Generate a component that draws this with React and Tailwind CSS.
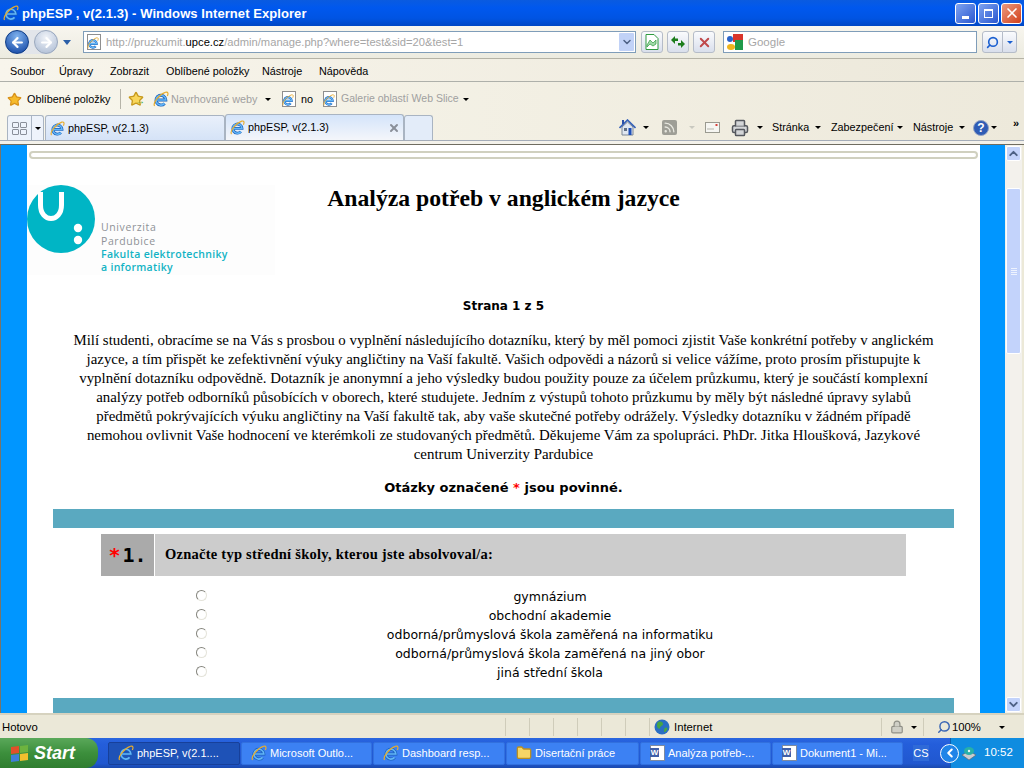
import { ChevronDown, Search, X, Star, Rss, Printer, Folder, Lock, ChevronLeft, ChevronUp, ArrowLeft, ArrowRight } from "lucide-react";

const introLines = [
  "Milí studenti, obracíme se na Vás s prosbou o vyplnění následujícího dotazníku, který by měl pomoci zjistit Vaše konkrétní potřeby v anglickém",
  "jazyce, a tím přispět ke zefektivnění výuky angličtiny na Vaší fakultě. Vašich odpovědi a názorů si velice vážíme, proto prosím přistupujte k",
  "vyplnění dotazníku odpovědně. Dotazník je anonymní a jeho výsledky budou použity pouze za účelem průzkumu, který je součástí komplexní",
  "analýzy potřeb odborníků působících v oborech, které studujete. Jedním z výstupů tohoto průzkumu by měly být následné úpravy sylabů",
  "předmětů pokrývajících výuku angličtiny na Vaší fakultě tak, aby vaše skutečné potřeby odrážely. Výsledky dotazníku v žádném případě",
  "nemohou ovlivnit Vaše hodnocení ve kterémkoli ze studovaných předmětů. Děkujeme Vám za spolupráci. PhDr. Jitka Hloušková, Jazykové",
  "centrum Univerzity Pardubice",
];

const options = [
  "gymnázium",
  "obchodní akademie",
  "odborná/průmyslová škola zaměřená na informatiku",
  "odborná/průmyslová škola zaměřená na jiný obor",
  "jiná střední škola",
];

const menu = [
  ["Soubor", "w-[49px]"],
  ["Úpravy", "w-[51px]"],
  ["Zobrazit", "w-[56px]"],
  ["Oblíbené položky", "w-[96px]"],
  ["Nástroje", "w-[57px]"],
  ["Nápověda", "w-[60px]"],
];

function IeIcon({ size = 16 }) {
  return (
    <svg width={size} height={size} viewBox="0 0 16 16" className="shrink-0">
      <path d="M3.6 9h9.2A4.9 4.9 0 1 0 11.6 12.4" fill="none" stroke="#1a5fb8" strokeWidth="3" />
      <path d="M3.6 9h9.2A4.9 4.9 0 1 0 11.6 12.4" fill="none" stroke="#63b6f7" strokeWidth="1.7" />
      <path d="M1.6 15C-.5 12 6 3.5 12.5 1.2c2.6-.8 3 1.4 1.8 3.8" fill="none" stroke="#e8ac2c" strokeWidth="1.2" />
    </svg>
  );
}

function PageIe() {
  return (
    <div className="relative w-[14px] h-[16px] bg-white border border-[#8f8f8f] shrink-0">
      <div className="absolute -left-[1px] top-[2px]">
        <IeIcon size={12} />
      </div>
    </div>
  );
}

function Caret({ className = "border-t-black" }) {
  return <div className={`w-0 h-0 border-x-[3px] border-x-transparent border-t-[3px] shrink-0 ${className}`} />;
}

function SmallButton({ children, className = "" }) {
  return (
    <div className={`h-[22px] shrink-0 flex items-center justify-center rounded-[3px] border border-[#b5bcc8] bg-[linear-gradient(#fafbfd,#d9dfec)] ${className}`}>
      {children}
    </div>
  );
}

function WinButton({ className, children }) {
  return (
    <div className={`w-[21px] h-[21px] rounded-[3px] border border-white flex items-center justify-center ${className}`}>
      {children}
    </div>
  );
}

function Tab({ active, width, children }) {
  return (
    <div className={`shrink-0 flex items-center gap-[3px] pl-[4px] border border-[#a9b4c2] border-b-0 rounded-t-[3px] ${width} ${active ? "bg-[linear-gradient(#d4e4fa,#f4f6fa)] h-[26px]" : "h-[25px] bg-[linear-gradient(#e9f0fb,#d5e3f7)]"}`}>
      {children}
    </div>
  );
}

function NavCircle({ dim, children }) {
  return (
    <div className={`w-[24px] h-[24px] rounded-full flex items-center justify-center border shrink-0 ${dim ? "bg-[radial-gradient(circle_at_50%_30%,#f0f3f8,#a9b9d2)] border-[#9aa8bd]" : "bg-[radial-gradient(circle_at_50%_25%,#7fb2ee,#0c3f9f)] border-[#0f3d86]"}`}>
      {children}
    </div>
  );
}

function WordIcon() {
  return (
    <div className="relative w-[15px] h-[16px] bg-white border border-[#7d8aa0] shrink-0">
      <div className="absolute -left-[1px] top-[2px] w-[9px] h-[9px] bg-[#3f5fa8] text-white text-[8px] leading-[9px] font-bold text-center">W</div>
    </div>
  );
}

function TaskButton({ active, icon, label, className = "" }) {
  return (
    <div className={`h-[23px] shrink-0 flex items-center gap-[3px] pl-[9px] rounded-[2px] text-white text-[11px] whitespace-nowrap overflow-hidden ${active ? "bg-[#1e52b7] border border-[#17409a]" : "bg-[#3c81f3] border border-[#3270de]"} ${className}`}>
      {icon}
      <span>{label}</span>
    </div>
  );
}

function Radio() {
  return <div className="w-[11px] h-[11px] -mt-[4px] rounded-full border border-t-[#85857d] border-l-[#85857d] border-r-[#e4e3da] border-b-[#e4e3da] bg-white shrink-0" />;
}

function Logo() {
  return (
    <div className="flex h-[90px] w-[248px] bg-[#fdfdfd]">
      <svg width="68" height="68" viewBox="0 0 68 68" className="shrink-0">
        <circle cx="34" cy="34" r="34" fill="#00b5c5" />
        <path d="M13.5 7v13c0 18 21 18 21 0V7" fill="none" stroke="#fff" strokeWidth="5" />
        <circle cx="51" cy="43" r="4.2" fill="#fff" />
        <circle cx="51" cy="55" r="4.2" fill="#fff" />
      </svg>
      <div className="ml-[6px] mt-[35px] font-['Open_Sans',sans-serif] text-[10.5px] leading-[14px] tracking-[0.6px] whitespace-nowrap">
        <div className="text-[#8f9297]">Univerzita</div>
        <div className="text-[#8f9297]">Pardubice</div>
        <div className="text-[#12b3c4] font-semibold leading-[13px] tracking-[0.3px]">Fakulta elektrotechniky</div>
        <div className="text-[#12b3c4] font-semibold leading-[13px] tracking-[0.3px]">a informatiky</div>
      </div>
    </div>
  );
}

export default function App() {
  return (
    <div className="w-[1024px] h-[768px] flex flex-col overflow-hidden font-['Liberation_Sans',sans-serif] text-[10.8px] text-black bg-[#ece9d8]">
      {/* Title bar */}
      <div className="h-[26px] shrink-0 flex items-center pl-[3px] pr-[2px] bg-[linear-gradient(#0a5be0,#0058ee_30%,#0054e3_70%,#0047c4)]">
        <IeIcon size={16} />
        <span className="ml-[3px] mt-[1px] font-bold text-[13px] tracking-[0.07px] text-white whitespace-nowrap">phpESP , v(2.1.3) - Windows Internet Explorer</span>
        <div className="ml-auto flex gap-[2px]">
          <WinButton className="bg-[linear-gradient(135deg,#7ea3f0,#2a57d0)]"><div className="w-[7px] h-[3px] bg-white mt-[9px] -ml-[1px]" /></WinButton>
          <WinButton className="bg-[linear-gradient(135deg,#7ea3f0,#2a57d0)]"><div className="w-[9px] h-[9px] border border-white border-t-2" /></WinButton>
          <WinButton className="bg-[linear-gradient(135deg,#ec9a80,#d2401a)]"><X size={16} strokeWidth={2.5} color="#fff" /></WinButton>
        </div>
      </div>

      {/* Address row */}
      <div className="h-[33px] shrink-0 flex items-center pl-[5px] bg-[linear-gradient(#f8f6ef,#ecebe0)] border-b border-[#b5b3a6]">
        <div className="flex items-center gap-[5px] rounded-full bg-[#e2e5ea]">
          <NavCircle><ArrowLeft size={15} strokeWidth={3.5} color="#fff" /></NavCircle>
          <NavCircle dim><ArrowRight size={15} strokeWidth={3.5} color="#fff" /></NavCircle>
        </div>
        <Caret className="ml-[5px] border-x-[4px] border-t-[5px] border-t-[#2a5fa8]" />
        <div className="ml-[12px] w-[553px] shrink-0 h-[22px] flex items-center pl-[3px] pr-[1px] bg-white border border-[#7f9db9]">
          <PageIe />
          <span className="ml-[5px] mt-[1px] text-[#a6a6a6] text-[11.2px] whitespace-nowrap">http://pruzkumit.<span className="text-black">upce.cz</span>/admin/manage.php?where=test&amp;sid=20&amp;test=1</span>
          <div className="ml-auto w-[15px] h-[18px] flex items-center justify-center bg-[#c1d2f7] rounded-[1px]"><ChevronDown size={12} strokeWidth={3} color="#4d6185" /></div>
        </div>
        <SmallButton className="ml-[5px] w-[22px]">
          <svg width="14" height="16" viewBox="0 0 14 16">
            <path d="M1 .5h8l4 4v11H1z" fill="#fff" stroke="#2e9a3e" />
            <path d="M2 11l3-5 3 3 3-3v4l-3 2-3-2-3 3z" fill="#9fd8a8" stroke="#2e9a3e" strokeWidth=".7" />
          </svg>
        </SmallButton>
        <SmallButton className="ml-[4px] w-[22px]">
          <svg width="16" height="14" viewBox="0 0 16 14">
            <path d="M1 5l4-4v2.5h3V6H5v3zM15 9l-4 4v-2.5H8V8h3V5z" fill="#1c7d1c" />
          </svg>
        </SmallButton>
        <SmallButton className="ml-[4px] w-[22px]"><X size={15} strokeWidth={3} color="#c0494b" /></SmallButton>
        <div className="ml-[8px] w-[254px] shrink-0 h-[22px] flex items-center bg-white border border-[#7f9db9] pl-[2px]">
          <svg width="17" height="16" viewBox="0 0 17 16">
            <rect x="7" y="0" width="10" height="8" fill="#d9352b" />
            <rect x="9" y="6" width="8" height="10" fill="#1f9a4a" />
            <circle cx="4" cy="5" r="3" fill="#2a63c9" />
            <ellipse cx="5" cy="13" rx="4" ry="3" fill="#efb41c" />
          </svg>
          <span className="ml-[5px] mt-[1px] text-[#a6a6a6] text-[11.5px]">Google</span>
        </div>
        <SmallButton className="ml-[5px] w-[21px] rounded-r-none"><Search size={13} strokeWidth={3} color="#1a5fd0" className="-scale-x-100" /></SmallButton>
        <SmallButton className="w-[14px] rounded-l-none border-l-0"><Caret className="border-t-[#1a5fd0]" /></SmallButton>
      </div>

      {/* Menu row */}
      <div className="h-[23px] shrink-0 flex items-center pl-[10px] pt-[2px] bg-[linear-gradient(90deg,#f8f5ec,#ece8da)] border-b border-[#aeb0aa]">
        {menu.map(([label, width]) => (
          <span key={label} className={`${width} whitespace-nowrap`}>{label}</span>
        ))}
      </div>

      {/* Favorites row */}
      <div className="h-[33px] shrink-0 flex items-center pl-[7px] pt-[1px] bg-[linear-gradient(90deg,#f8f6ec,#ede9db)]">
        <Star size={15} fill="#f6bb2b" color="#d8921a" />
        <span className="ml-[5px] w-[93px] shrink-0 whitespace-nowrap">Oblíbené položky</span>
        <div className="w-px h-[20px] bg-[#b6b4a8]" />
        <div className="ml-[7px] relative w-[17px] h-[16px] shrink-0">
          <Star size={16} fill="#f9d65a" color="#c79a1e" />
          <div className="absolute right-0 bottom-[1px] text-[#3aa63a] font-bold text-[10px] leading-none">→</div>
        </div>
        <div className="ml-[8px]"><IeIcon size={16} /></div>
        <span className="ml-[2px] w-[88px] shrink-0 text-[#a0a0a0] whitespace-nowrap">Navrhované weby</span>
        <Caret className="ml-[6px]" />
        <div className="ml-[11px]"><PageIe /></div>
        <span className="ml-[5px] w-[22px] shrink-0">no</span>
        <PageIe />
        <span className="ml-[4px] w-[116px] shrink-0 text-[#a0a0a0] text-[10.5px] whitespace-nowrap">Galerie oblastí Web Slice</span>
        <Caret className="ml-[6px]" />
      </div>

      {/* Tab row */}
      <div className="h-[26px] shrink-0 flex items-end pl-[7px] bg-[linear-gradient(90deg,#f8f6ec,#ede9db)] border-b border-[#a4acb8]">
        <div className="h-[25px] w-[37px] shrink-0 flex border border-[#a9b4c2] border-b-0 rounded-t-[3px] bg-[#eef3fb]">
          <div className="w-[24px] flex items-center justify-center border-r border-[#a9b4c2]">
            <div className="grid grid-cols-2 gap-[1px]">
              <div className="w-[7px] h-[6px] border border-[#8a8f99] rounded-[1px]" />
              <div className="w-[7px] h-[6px] border border-[#8a8f99] rounded-[1px]" />
              <div className="w-[7px] h-[6px] border border-[#8a8f99] rounded-[1px]" />
              <div className="w-[7px] h-[6px] border border-[#8a8f99] rounded-[1px]" />
            </div>
          </div>
          <div className="flex-1 flex items-center justify-center"><Caret /></div>
        </div>
        <Tab width="w-[180px] ml-[1px]">
          <IeIcon size={15} />
          <span className="whitespace-nowrap">phpESP, v(2.1.3)</span>
        </Tab>
        <Tab active width="w-[179px]">
          <IeIcon size={15} />
          <span className="whitespace-nowrap">phpESP, v(2.1.3)</span>
          <X className="ml-[56px]" size={12} strokeWidth={4} color="#8a8f99" />
        </Tab>
        <div className="h-[25px] w-[29px] shrink-0 border border-[#a9b4c2] border-b-0 rounded-t-[3px] bg-[#e3ecf9]" />
        <div className="ml-[186px] h-[25px] flex items-center shrink-0">
          <svg width="17" height="17" viewBox="0 0 17 17" className="shrink-0">
            <path d="M3 8v8h11V8L8.5 3z" fill="#dfe6f0" stroke="#7d8796" />
            <path d="M.5 9l8-8 8 8" fill="none" stroke="#3560b8" strokeWidth="1.6" />
            <rect x="3" y="1" width="2" height="4" fill="#2a4fa8" />
            <rect x="9.5" y="9" width="3" height="7" fill="#1f4fb8" />
            <rect x="5" y="9" width="3" height="3" fill="#5f6f86" />
          </svg>
          <Caret className="ml-[7px]" />
          <Rss className="ml-[13px] shrink-0 bg-[#9e9e96] rounded-[2px] p-[1px]" size={15} strokeWidth={2.5} color="#e8e8e0" />
          <Caret className="ml-[12px] border-t-[#c9c9c0]" />
          <svg width="15" height="11" viewBox="0 0 15 11" className="ml-[10px] shrink-0">
            <rect x=".5" y=".5" width="14" height="10" fill="#f6f6f2" stroke="#9a9a90" />
            <path d="M2 7h7" stroke="#b5b5ac" />
            <rect x="10.5" y="2" width="2" height="2" fill="#d8413a" />
          </svg>
          <Printer className="ml-[11px] shrink-0" size={18} fill="#d4d6d8" color="#55585e" />
          <Caret className="ml-[8px]" />
          <span className="ml-[9px] w-[38px] shrink-0 whitespace-nowrap">Stránka</span>
          <Caret className="ml-[5px]" />
          <span className="ml-[10px] w-[61px] shrink-0 whitespace-nowrap">Zabezpečení</span>
          <Caret className="ml-[5px]" />
          <span className="ml-[10px] w-[41px] shrink-0 whitespace-nowrap">Nástroje</span>
          <Caret className="ml-[5px]" />
          <div className="ml-[8px] w-[16px] h-[16px] shrink-0 rounded-full bg-[#2f5cb5] border border-[#93a3c4] text-white font-bold text-[12px] leading-[14px] text-center">?</div>
          <Caret className="ml-[2px]" />
          <span className="ml-[16px] -mt-[8px] text-[11px] font-bold leading-none">»</span>
        </div>
      </div>

      <div className="h-[4px] shrink-0 bg-[#f3f1ea] border-b border-[#6f6c60]" />

      {/* Page area */}
      <div className="flex h-[568px] shrink-0 overflow-hidden">
        <div className="w-[1px] bg-[#77756a] shrink-0" />
        <div className="w-[26px] bg-[#0096ff] shrink-0" />
        <main className="w-[953px] shrink-0 bg-white overflow-hidden">
          <div className="ml-[2px] mr-[2px] mt-[6px] h-[8px] border-2 border-[#d0d0bf] rounded-[4px]" />

          <div className="grid grid-cols-[250px_1fr_250px] mt-[26px]">
            <Logo />
            <h1 className="font-['Liberation_Serif',serif] font-bold text-[23.7px] leading-[28px] text-center whitespace-nowrap -mt-[1px]">Analýza potřeb v anglickém jazyce</h1>
            <div />
          </div>

          <p className="mt-[22px] font-['DejaVu_Sans',sans-serif] font-bold text-[12px] leading-[18px] text-center">Strana 1 z 5</p>

          <div className="mt-[16px] font-['Liberation_Serif',serif] text-[14.9px] leading-[19px] text-center whitespace-nowrap">
            {introLines.map((line) => <div key={line}>{line}</div>)}
          </div>

          <p className="mt-[15px] font-['DejaVu_Sans',sans-serif] font-bold text-[13px] leading-[18px] text-center">
            Otázky označené <span className="text-[#ff0000]">*</span> jsou povinné.
          </p>

          <div className="mt-[12px] mx-[26px] h-[19px] bg-[#5aa9c0]" />

          <div className="mt-[6px] ml-[74px] mr-[74px] h-[42px] flex">
            <div className="w-[53px] bg-[#aaaaaa] flex items-center justify-center font-['DejaVu_Sans_Mono',monospace] font-bold text-[20px]">
              <span className="text-[#ff0000]">*</span><span className="ml-[2px]">1.</span>
            </div>
            <div className="ml-px flex-1 bg-[#cccccc] flex items-center pl-[10px] font-['Liberation_Serif',serif] font-bold text-[14.5px] tracking-[0.25px]">
              Označte typ střední školy, kterou jste absolvoval/a:
            </div>
          </div>

          <div className="mt-[12px] ml-[169px] mr-[87px]">
            {options.map((option) => (
              <div key={option} className="h-[19px] flex items-center">
                <Radio />
                <span className="flex-1 text-center font-['DejaVu_Sans',sans-serif] text-[12.5px]">{option}</span>
              </div>
            ))}
          </div>

          <div className="mt-[15px] mx-[26px] h-[16px] bg-[#5aa9c0]" />
        </main>
        <div className="w-[25px] bg-[#0096ff] shrink-0" />

        {/* Scrollbar */}
        <div className="w-[17px] shrink-0 bg-[#f3f1ec] flex flex-col items-center pt-[1px] pb-[1px]">
          <div className="w-[15px] h-[15px] rounded-[2px] border border-white bg-[#c3d3fb] flex items-center justify-center"><ChevronUp size={13} strokeWidth={3.5} color="#4d6185" /></div>
          <div className="mt-[27px] w-[15px] h-[166px] rounded-[2px] border border-white bg-[#c3d3fb] flex flex-col items-center justify-center gap-px">
            <div className="w-[6px] h-px bg-[#eef3fe]" />
            <div className="w-[6px] h-px bg-[#eef3fe]" />
            <div className="w-[6px] h-px bg-[#eef3fe]" />
            <div className="w-[6px] h-px bg-[#eef3fe]" />
          </div>
          <div className="mt-auto w-[15px] h-[15px] rounded-[2px] border border-white bg-[#c3d3fb] flex items-center justify-center"><ChevronDown size={13} strokeWidth={3.5} color="#4d6185" /></div>
        </div>
        <div className="w-[2px] bg-[#ece9d8] shrink-0" />
      </div>

      {/* Status bar */}
      <div className="h-[25px] shrink-0 flex items-center pl-[2px] pt-[1px] bg-[#ebe8d8] border-t-2 border-[#d6d2bf] text-[11.3px]">
        <span className="w-[503px] shrink-0">Hotovo</span>
        <div className="flex shrink-0">
          {[0, 1, 2, 3, 4, 5].map((i) => <div key={i} className="w-[24px] h-[18px] border-l border-[#cfccba]" />)}
        </div>
        <div className="h-[18px] w-[232px] shrink-0 border-l border-[#cfccba] flex items-center pl-[4px]">
          <svg width="16" height="16" viewBox="0 0 16 16">
            <circle cx="8" cy="8" r="7.5" fill="#2a6fc4" />
            <path d="M4 3c3-1 5 0 5 2s-3 2-3 4-3 0-3-2 0-3 1-4zM11 9c2-1 3 0 2 2s-3 3-3 1 0-2 1-3z" fill="#46a546" />
          </svg>
          <span className="ml-[4px]">Internet</span>
        </div>
        <div className="w-[42px] h-[18px] shrink-0 border-l border-[#cfccba] flex items-center pl-[8px]">
          <Lock size={14} fill="#cfcfc6" color="#8f8f86" />
          <Caret className="ml-[7px]" />
        </div>
        <div className="h-[18px] flex items-center border-l border-[#cfccba] pl-[13px]">
          <Search size={14} strokeWidth={2.5} color="#3a66b5" className="-scale-x-100" />
          <span className="ml-[1px]">100%</span>
          <Caret className="ml-[18px]" />
        </div>
      </div>

      {/* Taskbar */}
      <div className="h-[30px] shrink-0 flex items-center bg-[linear-gradient(#2a66df,#245edb_20%,#2057cf_85%,#1a49ad)]">
        <div className="w-[98px] h-[30px] shrink-0 flex items-center pl-[11px] rounded-r-[12px] bg-[linear-gradient(#5aa85a,#3c8f3c_50%,#2f7d2f)]">
          <div className="grid grid-cols-2 gap-px -skew-y-6">
            <div className="w-[8px] h-[7px] bg-[#e2502a]" />
            <div className="w-[8px] h-[7px] bg-[#6db33f]" />
            <div className="w-[8px] h-[7px] bg-[#3f7fd8]" />
            <div className="w-[8px] h-[7px] bg-[#f1c02e]" />
          </div>
          <span className="ml-[6px] italic font-bold text-[18px] text-white">Start</span>
        </div>
        <div className="ml-[10px] flex gap-px">
          <TaskButton active className="w-[132px]" icon={<IeIcon size={16} />} label="phpESP, v(2.1...." />
          <TaskButton className="w-[131px]" icon={<IeIcon size={16} />} label="Microsoft Outlo..." />
          <TaskButton className="w-[132px]" icon={<IeIcon size={16} />} label="Dashboard resp..." />
          <TaskButton className="w-[133px] pl-[4px]" icon={<Folder size={16} fill="#f6d566" color="#b98f22" />} label="Disertační práce" />
          <TaskButton className="w-[131px]" icon={<WordIcon />} label="Analýza potřeb-..." />
          <TaskButton className="w-[131px]" icon={<WordIcon />} label="Dokument1 - Mi..." />
        </div>
        <div className="ml-[10px] w-[16px] h-[16px] shrink-0 bg-[#2f6ad8] text-white text-center leading-[16px] text-[11px]">CS</div>
        <div className="ml-auto w-[74px] h-[30px] shrink-0 flex items-center bg-[#0f8ce0] border-l border-[#0a5fb0] relative">
          <div className="absolute -left-[11px] w-[19px] h-[19px] rounded-full bg-[#1f84e8] border border-white flex items-center justify-center">
            <ChevronLeft size={14} strokeWidth={3.5} color="#fff" />
          </div>
          <svg width="16" height="16" viewBox="0 0 16 16" className="ml-[10px] shrink-0">
            <path d="M1 10l7-4 7 4-7 5z" fill="#c9ccd0" stroke="#5a5f66" strokeWidth=".6" />
            <ellipse cx="8" cy="6" rx="5" ry="4" fill="#27b0a8" />
            <circle cx="8" cy="6" r="1.2" fill="#e6f7f5" />
          </svg>
          <span className="ml-[7px] text-white text-[11.5px]">10:52</span>
        </div>
      </div>
    </div>
  );
}
